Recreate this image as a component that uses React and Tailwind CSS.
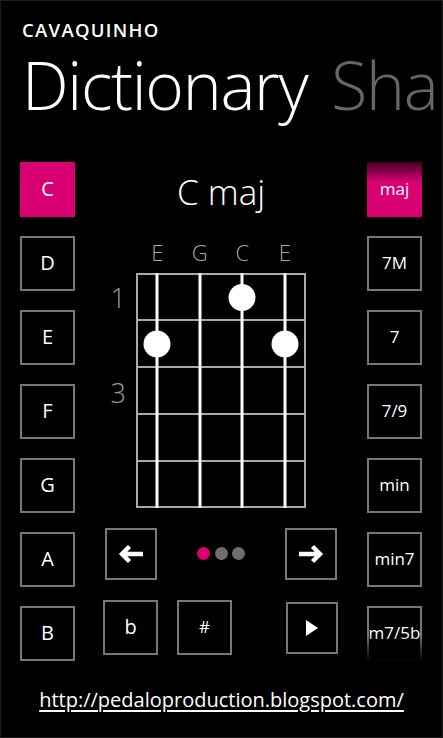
import React from 'react'

const roots = ['C', 'D', 'E', 'F', 'G', 'A', 'B']
const kinds = ['maj', '7M', '7', '7/9', 'min', 'min7', 'm7/5b']
const strings = ['E', 'G', 'C', 'E']

// string x positions and fret y positions inside the diagram svg
const stringX = [22, 65, 107, 150]
const fretY = [3, 49, 96, 143, 190, 236]
const dots = [
  { s: 2, y: 26.5 },
  { s: 0, y: 73 },
  { s: 3, y: 73 },
]

function Box({ label, active, small, className = '' }) {
  return (
    <div
      className={
        'w-[55px] h-[55px] flex items-center justify-center text-white ' +
        (active ? 'bg-[#d80073] ' : 'border-2 border-[#777777] ') +
        (small ? 'text-[17px] ' : 'text-[20px] ') +
        className
      }
    >
      {label}
    </div>
  )
}

function Fretboard() {
  return (
    <svg width="172" height="238" viewBox="0 0 172 238">
      {fretY.map((y, i) => (
        <line key={'f' + i} x1="1" x2="171" y1={y} y2={y} stroke="#a8a8a8" strokeWidth="2" />
      ))}
      <line x1="2" x2="2" y1="2" y2="237" stroke="#a8a8a8" strokeWidth="2" />
      <line x1="170" x2="170" y1="2" y2="237" stroke="#a8a8a8" strokeWidth="2" />
      {stringX.map((x, i) => (
        <line key={'s' + i} x1={x} x2={x} y1="2" y2="237" stroke="#ffffff" strokeWidth="3" />
      ))}
      {dots.map((d, i) => (
        <circle key={'d' + i} cx={stringX[d.s]} cy={d.y} r="13.5" fill="#ffffff" />
      ))}
    </svg>
  )
}

function Arrow({ dir }) {
  return (
    <svg width="26" height="20" viewBox="0 0 26 20" className={dir === 'right' ? 'rotate-180' : ''}>
      <path d="M11.5 2.5 L4 10 L11.5 17.5 M4 10 H25" fill="none" stroke="#ffffff" strokeWidth="4.4" />
    </svg>
  )
}

export default function App() {
  return (
    <div
      className="w-[443px] h-[738px] bg-black text-white overflow-hidden shadow-[inset_0_0_0_1px_#1c1c1c]"
      style={{ fontFamily: '"Open Sans", "Liberation Sans", sans-serif' }}
    >
      {/* title area */}
      <div className="pt-[21px] pl-[22px] whitespace-nowrap">
        <div className="text-[18.5px] leading-none font-semibold tracking-[1.3px]">CAVAQUINHO</div>
        <div className="mt-[11px] text-[66px] leading-none font-light tracking-[-1.3px]">
          Dictionary <span className="ml-[8px] text-[#666666]">Share</span>
        </div>
      </div>

      {/* main area */}
      <div className="mt-[45px] flex pl-[20px] pr-[21px]">
        {/* roots */}
        <div className="flex flex-col gap-[19px]">
          {roots.map((r, i) => (
            <Box key={r} label={r} active={i === 0} />
          ))}
        </div>

        {/* chord diagram */}
        <div className="flex-1 flex flex-col items-center">
          <div className="mt-[12px] text-[35px] leading-none font-light">C maj</div>

          <div className="mt-[32px] w-[172px] flex px-px text-[22px] leading-none font-light text-[#a6a6a6]">
            {strings.map((s, i) => (
              <div key={i} className="w-[43px] text-center">{s}</div>
            ))}
          </div>

          <div className="relative mt-[8px]">
            <Fretboard />
            <div className="absolute right-full mr-[9px] top-[13px] text-[27px] leading-none font-light text-[#999999]">1</div>
            <div className="absolute right-full mr-[9px] top-[108px] text-[27px] leading-none font-light text-[#999999]">3</div>
          </div>

          <div className="mt-[19px] w-full px-[30px] flex items-center justify-between">
            <div className="w-[52px] h-[52px] border-2 border-[#777777] flex items-center justify-center">
              <Arrow dir="left" />
            </div>
            <div className="flex gap-[4.5px]">
              <div className="w-[13px] h-[13px] rounded-full bg-[#d80073]" />
              <div className="w-[13px] h-[13px] rounded-full bg-[#6e6e6e]" />
              <div className="w-[13px] h-[13px] rounded-full bg-[#6e6e6e]" />
            </div>
            <div className="w-[52px] h-[52px] border-2 border-[#777777] flex items-center justify-center">
              <Arrow dir="right" />
            </div>
          </div>

          <div className="mt-[20px] w-full pl-[28px] pr-[29px] flex items-start">
            <Box label="b" />
            <Box label="#" small className="ml-[19px]" />
            <div className="ml-auto mt-[2px] w-[52px] h-[52px] border-2 border-[#777777] flex items-center justify-center">
              <svg width="14" height="18" viewBox="0 0 14 18">
                <path d="M1 1 L13 9 L1 17 Z" fill="#ffffff" />
              </svg>
            </div>
          </div>
        </div>

        {/* chord kinds */}
        <div className="relative flex flex-col gap-[19px]">
          {kinds.map((k, i) => (
            <Box key={k} label={k} active={i === 0} small />
          ))}
          <div className="absolute top-0 left-0 right-0 h-[20px] bg-linear-to-b from-black/70 to-transparent" />
          <div className="absolute bottom-0 left-0 right-0 h-[26px] bg-linear-to-t from-black to-transparent" />
        </div>
      </div>

      {/* link */}
      <div className="mt-[28px] text-center">
        <a className="text-[20px] leading-none underline underline-offset-[3px] text-white">
          http://pedaloproduction.blogspot.com/
        </a>
      </div>
    </div>
  )
}
